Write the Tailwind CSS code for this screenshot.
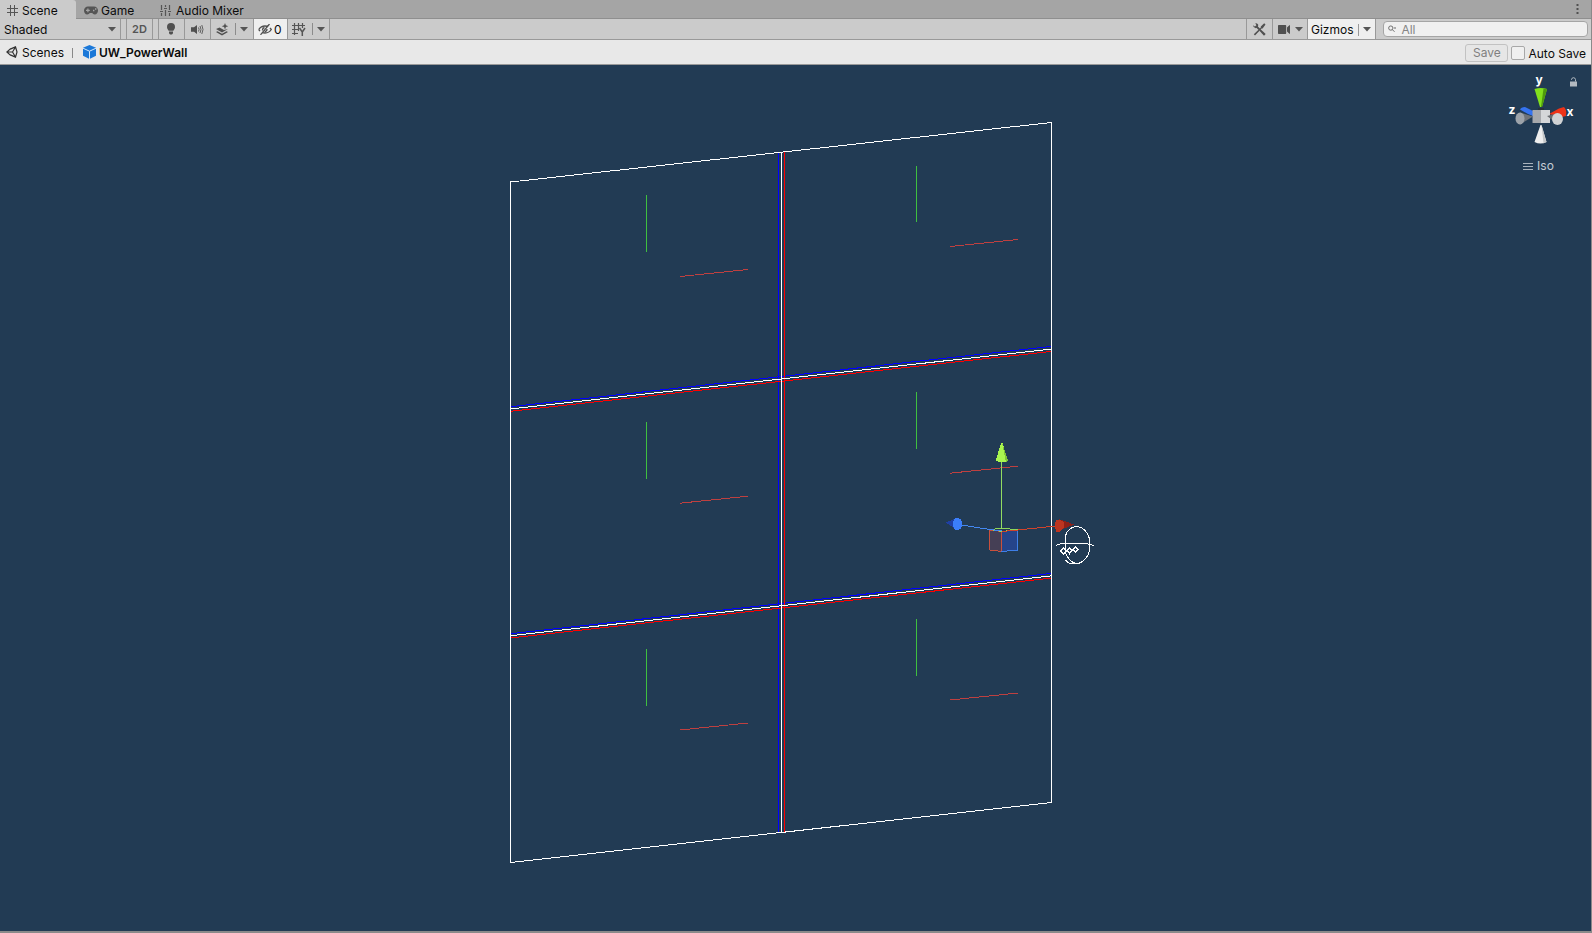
<!DOCTYPE html>
<html lang="en">
<head>
<meta charset="utf-8">
<title>Scene - UW_PowerWall</title>
<script src="https://cdn.jsdelivr.net/npm/@tailwindcss/browser@4"></script>
</head>
<body class="h-screen flex flex-col overflow-hidden bg-[#8a8a8a] pr-px pb-[2px] font-['Inter',sans-serif] text-xs text-[#0b0b0b]">

<!-- Tabs -->
<nav class="flex h-[19px] shrink-0 items-stretch bg-[#a5a5a5]">
  <button class="flex w-[76px] items-center gap-1 rounded-tr-[3px] bg-[#cbcbcb] pl-[7px] pt-[3px]">
    <svg class="-mt-[2px]" width="11" height="11" viewBox="0 0 11 11" fill="none" stroke="#555"><path d="M3.500 0v11M7.500 0v11M0 3.500h11M0 7.500h11"/></svg>
    Scene
  </button>
  <button class="flex w-[76px] items-center gap-[3px] border-b border-[#8f8f8f] pl-2 pt-[3px]">
    <svg class="-mt-px" width="14" height="9" viewBox="0 0 14 9"><path fill="#555" fill-rule="evenodd" d="M4 .5h6c2.300 0 4 1.700 4 4s-1.300 4-3.300 4c-1.200 0-1.900-.8-2.500-1.500H5.800C5.200 7.700 4.500 8.500 3.300 8.500 1.300 8.500 0 6.800 0 4.500s1.700-4 4-4zM3.300 2.500v1.300H2v1.200h1.300v1.300h1.200V5h1.300V3.800H4.500V2.500zM9 3.800v1.400h1.400V3.800zM11 2.300v1.400h1.400V2.300z"/></svg>
    Game
  </button>
  <button class="flex grow items-center gap-[5px] border-b border-[#8f8f8f] pl-2 pt-[3px]">
    <svg class="-mt-px" width="11" height="11" viewBox="0 0 11 11" stroke="#555" fill="none"><path d="M1.500 0v5M1.500 8v3M5.500 0v2M5.500 5v6M9.500 0v5M9.500 8v3M0 6.500h3M4 3.500h3M8 6.500h3" stroke-width="1.200"/></svg>
    Audio Mixer
  </button>
  <button aria-label="Tab menu" class="flex w-[27px] items-center justify-center border-b border-[#8f8f8f]">
    <svg width="3" height="11" viewBox="0 0 3 11" fill="#505050"><path d="M.5 0h2v2h-2zM.5 4h2v2h-2zM.5 8h2v2h-2z"/></svg>
  </button>
</nav>

<!-- Toolbar -->
<div class="flex h-[21px] shrink-0 items-stretch border-b border-[#999] bg-[#cbcbcb]">
  <div class="relative flex w-[121px] border-r border-[#999]">
    <select aria-label="Draw mode" class="w-full appearance-none bg-transparent pl-1 pt-px outline-none"><option>Shaded</option></select>
    <svg class="pointer-events-none absolute right-1 top-2" width="8" height="5" viewBox="0 0 8 5"><path d="M0 0h8L4 4.500z" fill="#555"/></svg>
  </div>
  <button class="ml-[5px] w-[27px] border-x border-[#999] text-[11px] font-semibold text-[#555]">2D</button>
  <button aria-label="Lighting" class="ml-[5px] flex w-[27px] items-center border-x border-[#999] pl-[7px]">
    <svg width="10" height="12" viewBox="0 0 10 12" fill="#505050"><path d="M5 0a4 4 0 0 1 4 4c0 1.700-1 2.500-1.700 3.800H2.700C2 6.500 1 5.700 1 4a4 4 0 0 1 4-4zM3 8.500h4v1.700L6 11.500H4L3 10.200z"/></svg>
  </button>
  <button aria-label="Audio" class="flex w-[26px] items-center border-r border-[#999] pl-[6px]">
    <svg width="13" height="11" viewBox="0 0 13 11"><path d="M0 3.300h3L6 1v9L3 7.700H0z" fill="#505050"/><path d="M7.500 3.500q1.200 2 0 4M9 2q2 3.500 0 7M10.800 1q2.400 4.500 0 9" fill="none" stroke="#606060"/></svg>
  </button>
  <button aria-label="Effects" class="flex w-[43px] items-center border-r border-[#999] pl-[5px]">
    <svg width="13" height="13" viewBox="0 0 13 13"><path d="M0 6l3.500-1.500L8 7l4-1L6 9.500zM0 9l1.500-.7L6 10.700l4.500-2.400L12 9l-6 3.500z" fill="#505050"/><path d="M9 0l.9 2.300 2.400.9-2.400.9L9 6.400l-.9-2.300-2.400-.9 2.400-.9z" fill="#505050"/></svg>
    <span class="ml-[6px] h-3 w-px bg-[#8c8c8c]"></span>
    <svg class="ml-1" width="8" height="5" viewBox="0 0 8 5"><path d="M0 0h8L4 4.500z" fill="#555"/></svg>
  </button>
  <button class="flex w-[34px] items-center gap-[2px] border-r border-[#999] bg-[#efefef] pl-1 pt-px">
    <svg width="14" height="11" viewBox="0 0 14 11" fill="none" stroke="#505050" stroke-width="1.300"><path d="M.7 5.500Q3 2 7 2q2 0 3.200.8M12 4l1.300 1.500Q11 9 7 9q-1.500 0-2.500-.4M2 7.200L.7 5.500M11.500 0L2.500 10.800M9 5q0 2.500-2.300 2.500M4.500 6.500Q4.200 4 6.500 3.500"/></svg>
    0
  </button>
  <button aria-label="Grid" class="flex w-[42px] items-center border-r border-[#999] pl-1">
    <svg width="14" height="13" viewBox="0 0 14 13" fill="none" stroke="#555" stroke-width="1.200"><path d="M2.500 0v12M6.500 0v8M10.500 0v5M0 2.500h13M0 6.500h7M0 10.500h6"/><path d="M7.500 5l2.800 4v4M13 5l-2.700 4" stroke-width="1.500"/></svg>
    <span class="ml-[6px] h-3 w-px bg-[#8c8c8c]"></span>
    <svg class="ml-1" width="8" height="5" viewBox="0 0 8 5"><path d="M0 0h8L4 4.500z" fill="#555"/></svg>
  </button>
  <div class="grow"></div>
  <button aria-label="Tools" class="flex w-[27px] items-center border-x border-[#999] pl-[6px]">
    <svg width="13" height="13" viewBox="0 0 13 13"><path d="M12.500 1.500L11.200.2 7.800 3.600v1L6.500 5.900l.8.800 1.300-1.300h1zM5.500 6.800L.8 11.200l1.200 1.300 4.500-4.700z" fill="#505050"/><path d="M3.500 3.500l5.500 5.500" stroke="#505050" stroke-width="1.800"/><path d="M8 9.500L9.500 8l3.200 3-1.700 1.800zM0 2.300L1.900 3.600 3.400 2.200 2.300.3Q4.500-.2 5.200 1.700 5.500 5 2.800 5.200.2 5 0 2.300z" fill="#505050"/></svg>
  </button>
  <button aria-label="Camera" class="flex w-[35px] items-center border-r border-[#999] pl-[5px]">
    <svg width="12" height="9" viewBox="0 0 12 9" fill="#505050"><path d="M.7 0h6.800q.7 0 .7.700v7.600q0 .7-.7.700H.7Q0 9 0 8.300V.7Q0 0 .7 0zM9 2.500L11.300.3h.7v8.400h-.7L9 6.500z"/></svg>
    <svg class="ml-[5px]" width="8" height="5" viewBox="0 0 8 5"><path d="M0 0h8L4 4.500z" fill="#555"/></svg>
  </button>
  <button class="flex w-[68px] items-center border-r border-[#999] bg-[#efefef] pl-[3px] pt-px">
    Gizmos
    <span class="ml-1 h-3 w-px bg-[#999]"></span>
    <svg class="ml-1" width="8" height="5" viewBox="0 0 8 5"><path d="M0 0h8L4 4.500z" fill="#555"/></svg>
  </button>
  <label class="ml-[7px] mr-[3px] mt-[2px] flex h-4 w-[205px] items-center gap-[5px] rounded-[4px] border border-[#a5a5a5] bg-[#f0f0f0] pl-1">
    <svg width="9" height="8" viewBox="0 0 9 8" fill="none" stroke="#666"><circle cx="3" cy="3" r="2.300"/><path d="M4.700 4.700L7 7"/><path d="M6 2.500h3L7.500 4z" fill="#666" stroke="none"/></svg>
    <input type="text" aria-label="Search" placeholder="All" class="w-full min-w-0 bg-transparent pt-px text-xs outline-none placeholder:text-[#858585]">
  </label>
</div>

<!-- Breadcrumbs -->
<div class="flex h-[25px] shrink-0 items-center border-b border-[#999] bg-[#e8e8e8] pt-px">
  <a href="#" class="flex items-center gap-1 pl-1.5">
    <svg class="-mt-px" width="12" height="12" viewBox="0 0 12 12" fill="none" stroke="#333" stroke-width="1.200"><path d="M4.200 3.100L9.500 .9l1.500 5.100-1.500 5.100-5.300-2.200M4.600 2.600L.9 6l3.700 3.400M1.500 6h5L9.200 1.500M6.500 6l2.700 4.500"/></svg>
    Scenes
  </a>
  <span class="ml-2 h-2.5 w-px bg-[#888]"></span>
  <a href="#" class="ml-[10px] flex items-center gap-[3px] font-semibold">
    <svg class="-mt-px" width="13" height="14" viewBox="0 0 13 14"><path d="M6.500 0L13 2.800v8L6.500 14 0 10.800v-8z" fill="#1b78d8"/><path d="M0 3.200l6.500 3 6.500-3M6.500 6.200V14" stroke="#d5e8fa" fill="none"/></svg>
    UW_PowerWall
  </a>
  <div class="grow"></div>
  <button disabled class="mr-px h-[18px] w-[43px] rounded-[3px] border border-[#c2c2c2] bg-[#e6e6e6] text-[#808080]">Save</button>
  <label class="ml-[2px] flex items-center gap-[3px] pr-[5px] pt-[3px]">
    <input type="checkbox" class="-mt-[2px] size-[14px] appearance-none rounded-[2px] border border-[#a8a8a8] bg-[#f0f0f0]">
    Auto Save
  </label>
</div>

<!-- Viewport -->
<main class="relative min-h-0 grow bg-[#223b54]">
  <svg class="size-full" viewBox="0 65 1591 866" fill="none" shape-rendering="crispEdges" role="img" aria-label="Power wall wireframe">
    <g stroke="#00f">
      <path d="M778.500 152V833M510 406.800L1052 346.300M510 633.800L1052 573.300"/>
    </g>
    <g stroke="#f00">
      <path d="M784.500 152V832M510 411.300L1052 351.300M510 638L1052 578"/>
    </g>
    <g stroke="#fff">
      <path d="M510.500 182V862.500L1051.500 802.500V122.500L510.500 182M781.500 152V832M510 409L1052 349M510 635.800L1052 575.800"/>
    </g>
    <g stroke="#3fbf40">
      <path d="M646.500 195v57M646.500 422v57M646.500 649v57M916.500 166v56M916.500 392v57M916.500 619v57"/>
    </g>
    <g stroke="#bf4040">
      <path d="M680 276.500l68-7M680 503.200l68-7M680 730l68-7M950 246.500l68-7M950 473.200l68-7M950 700l68-7"/>
    </g>

    <!-- Move handle -->
    <path d="M989.500 530l12 1.500v20l-12-1.500z" fill="#453f55" stroke="#c9503d"/>
    <path d="M1001.500 531.500l16-1.500v20l-16 1.500z" fill="#25448a" stroke="#3e7fe8"/>
    <path d="M1001.500 531v20" stroke="#c9503d"/>
    <path d="M990 529.500l11-1 17 1-16 2z" stroke="#8fd65a"/>
    <path d="M958 524.500l32 5 12 1.500" stroke="#4488f0"/>
    <path d="M1002 531.500l16-1.500 38-4" stroke="#d0432b"/>
    <path d="M1001.500 461v68" stroke="#93dc62"/>
    <path d="M1001 443h1.500l5.500 18q-6 2-12.300 0z" fill="#a9f54f"/>
    <path d="M1002.200 443l5.800 18-2 1z" fill="#7fc436"/>
    <path d="M946 522.500l8-3.500v9z" fill="#1f3fa5"/>
    <ellipse cx="957.500" cy="524" rx="5" ry="6" fill="#3b7efa"/>
    <path d="M1059 519l15 5.500-15 6z" fill="#8c2018"/>
    <path d="M1056 519.500h4l4 3v5l-4 4h-4q-2-6 0-12z" fill="#bd3520"/>

    <!-- Head outline -->
    <g stroke="#fff">
      <path d="M1065 541c0-9 4-13.500 11.500-14.500c7 .5 13.500 7 13.500 18s-5 17-13 19.500c-7-2-10.500-7-12-13z"/>
      <path d="M1056 545.500l4-1.500 5-.5 23 .5 6 1.500M1065 560l4 3 9 1"/>
      <path d="M1061 551l2.500-3 2.500 3-2.500 3zM1067 550.500l2.500-2.500 2.500 2.500-2.500 3zM1073 549.500l2.500-2.500 2.500 2.500-2.500 2.500z" stroke-width="1.500"/>
    </g>
  </svg>

  <!-- Orientation gizmo -->
  <div class="absolute right-0 top-0 flex w-[100px] flex-col items-center text-[#c5ccd4]">
    <svg class="w-[100px]" viewBox="-1 0 100 90" role="img" aria-label="Orientation">
      <g font-family="Inter, sans-serif" font-size="12" font-weight="700" fill="#fff" text-anchor="middle">
        <text x="47" y="19">y</text><text x="20" y="49">z</text><text x="78" y="51">x</text>
      </g>
      <path d="M42.500 24q6-2 12.500 0L50 42h-2z" fill="#82e01c"/><path d="M51.500 23.500l3.500.5L50 42h-1z" fill="#4e9a0c"/>
      <path d="M28 44.500q1-2.500 5-2.500l8 4v5l-5-2z" fill="#3573f0"/><path d="M67 43.500l5-1.500q3 3 2 9l-4 1-13-3z" fill="#ed3318"/>
      <path d="M46 43h6v2h-6z" fill="#29303a"/>
      <path d="M40.500 45h8.500v13h-8.500z" fill="#a7a9ac"/><path d="M49 45h9v13h-9z" fill="#d5d7d9"/>
      <path d="M28 47.500l13 4-13 8z" fill="#6e7379"/><ellipse cx="28" cy="53.500" rx="4.500" ry="6" fill="#9da3aa"/>
      <path d="M55 51l10-2.500v10z" fill="#686c70"/><ellipse cx="65.500" cy="54" rx="5.500" ry="6" fill="#d0d2d4"/>
      <path d="M48.500 60h1L54.500 77q-6 3-12 0z" fill="#eee"/><path d="M49.500 60l5 17-3 1.300z" fill="#c4c6c8"/>
      <path d="M78 16.500h7V21.500h-7z" fill="#b3bac1"/><path d="M79.500 15v-.5q.3-1.800 2-1.800t2 1.800v2" stroke="#b3bac1" fill="none"/>
    </svg>
    <button class="mt-[3px] flex items-center gap-1 pr-[5px]">
      <svg width="10" height="9" viewBox="0 0 10 9" stroke="#a9b3bd"><path d="M0 1.500h10M0 4.500h10M0 7.500h10"/></svg>
      Iso
    </button>
  </div>
</main>
</body>
</html>
